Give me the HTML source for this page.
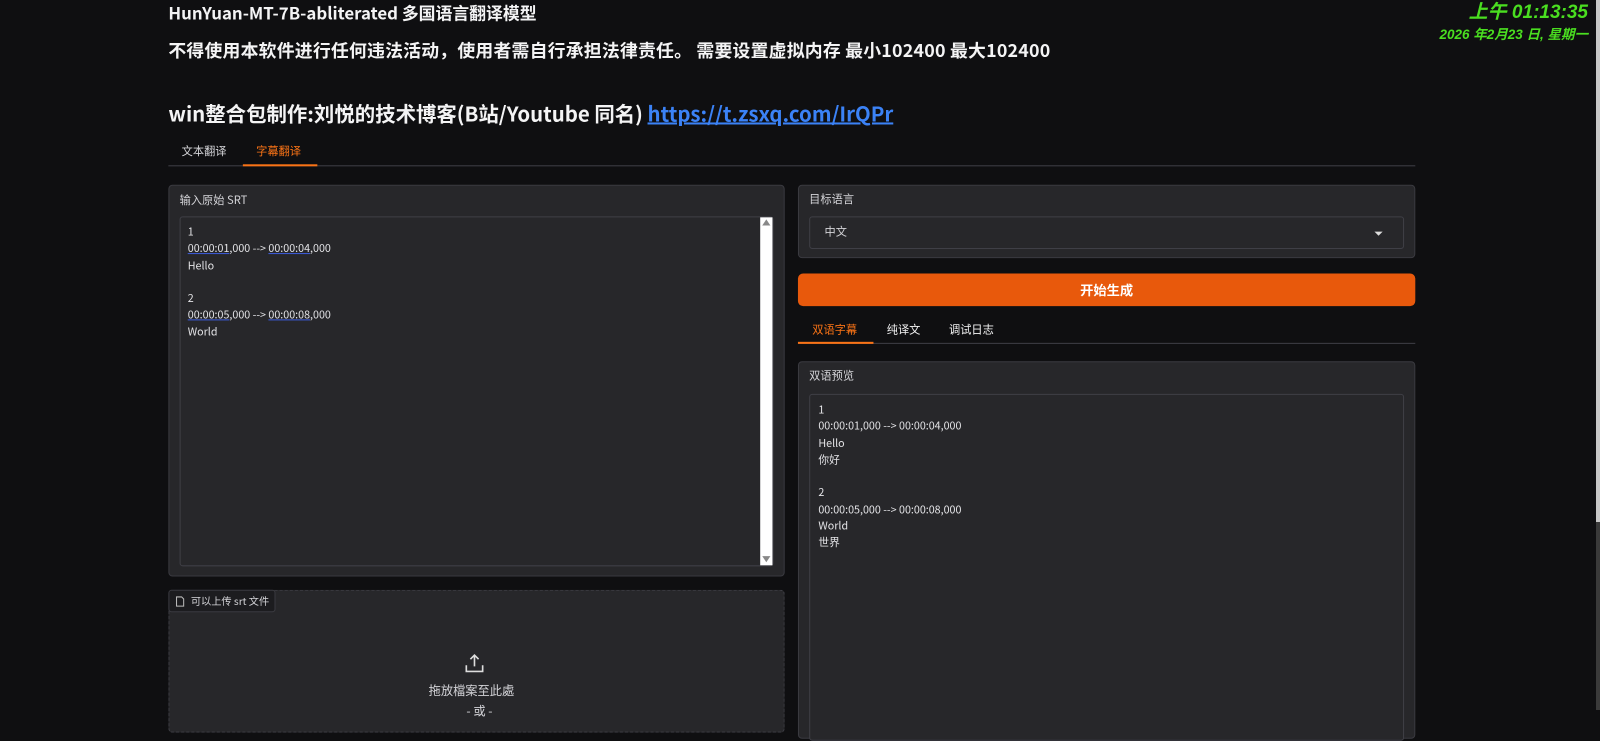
<!DOCTYPE html>
<html><head><meta charset="utf-8"><style>
*{box-sizing:border-box;margin:0;padding:0}
body{width:1600px;height:710px;overflow:hidden;background:#0f0f11;color:#e4e4e7;font-family:"Noto Sans CJK SC","Liberation Sans",sans-serif;position:relative}
#w{position:absolute;left:0;top:0;width:1568px;height:700px;transform:scale(1.0204);transform-origin:0 0}
.a{position:absolute}
.h{font-weight:bold;color:#f4f4f5;white-space:nowrap;line-height:1.2}
.panel{background:#27272a;border:1px solid #3a3a40;border-radius:4px}
.box{background:#27272a;border:1px solid #3f3f46;border-radius:3px}
.s{font-size:11px;color:#d4d4d8;line-height:1.3}
.mono{font-size:10.5px;line-height:16.3px;color:#e4e4e7}
u{text-decoration:underline;text-decoration-color:#3b5bdb}
</style></head><body>
<div id="w">
<div class="a h" style="left:165px;top:3px;font-size:16.5px">HunYuan-MT-7B-abliterated 多国语言翻译模型</div>
<div class="a h" style="left:165px;top:39px;font-size:17.5px;letter-spacing:0.2px">不得使用本软件进行任何违法活动，使用者需自行承担法律责任。 需要设置虚拟内存 最小102400 最大102400</div>
<div class="a h" style="left:165px;top:99px;font-size:20px">win整合包制作:刘悦的技术博客(B站/Youtube 同名) <span style="color:#3b82f6;text-decoration:underline">https://t.zsxq.com/IrQPr</span></div>
<!-- tabs -->
<div class="a s" style="left:178px;top:141px">文本翻译</div>
<div class="a s" style="left:251px;top:141px;color:#f97316">字幕翻译</div>
<div class="a" style="left:165px;top:162px;width:1222px;height:1px;background:#3f3f46"></div>
<div class="a" style="left:238px;top:161px;width:73px;height:2px;background:#f97316"></div>
<!-- left panel -->
<div class="a panel" style="left:165px;top:181px;width:604px;height:384px"></div>
<div class="a s" style="left:176px;top:189px">输入原始 SRT</div>
<div class="a box" style="left:176px;top:212px;width:582px;height:343px"></div>
<div class="a" style="left:745px;top:213px;width:12px;height:341px;background:#fff"></div>
<div class="a" style="left:747px;top:215px;width:0;height:0;border-left:4px solid transparent;border-right:4px solid transparent;border-bottom:6px solid #888"></div>
<div class="a" style="left:747px;top:545px;width:0;height:0;border-left:4px solid transparent;border-right:4px solid transparent;border-top:6px solid #888"></div>
<div class="a mono" style="left:184px;top:220px">1<br><u>00:00:01</u>,000 --&gt; <u>00:00:04</u>,000<br>Hello<br><br>2<br><u>00:00:05</u>,000 --&gt; <u>00:00:08</u>,000<br>World</div>
<!-- upload -->
<div class="a" style="left:165px;top:578px;width:604px;height:140px;background:#27272a;border:1px dashed #3f3f46;border-radius:4px"></div>
<div class="a" style="left:165px;top:578px;width:105px;height:22px;background:#1c1c1f;border:1px solid #3a3a40;border-radius:3px"></div>
<svg class="a" style="left:172px;top:584px" width="9" height="11" viewBox="0 0 9 11"><path d="M1 1h5l2 2v7H1z" fill="none" stroke="#bbb" stroke-width="1"/></svg>
<div class="a" style="left:187px;top:581px;font-size:10px;color:#d4d4d8">可以上传 srt 文件</div>
<svg class="a" style="left:455px;top:640px" width="20" height="20" viewBox="0 0 20 20" fill="none" stroke="#ddd" stroke-width="1.6"><path d="M10 13V2M6 6l4-4 4 4M2 12v6h16v-6"/></svg>
<div class="a" style="left:420px;top:668px;font-size:12px;color:#d4d4d8">拖放檔案至此處</div>
<div class="a" style="left:457px;top:688px;font-size:12px;color:#d4d4d8">- 或 -</div>
<!-- right -->
<div class="a panel" style="left:782px;top:181px;width:605px;height:72px"></div>
<div class="a s" style="left:793px;top:188px">目标语言</div>
<div class="a box" style="left:793px;top:212px;width:583px;height:32px"></div>
<div class="a s" style="left:808px;top:220px">中文</div>
<div class="a" style="left:1347px;top:227px;border-left:4px solid transparent;border-right:4px solid transparent;border-top:4px solid #ddd"></div>
<div class="a" style="left:782px;top:268px;width:605px;height:32px;background:#e8590c;border-radius:5px;color:#fff;font-weight:bold;font-size:13px;text-align:center;line-height:32px">开始生成</div>
<div class="a s" style="left:796px;top:316px;color:#f97316">双语字幕</div>
<div class="a s" style="left:869px;top:316px;color:#f4f4f5">纯译文</div>
<div class="a s" style="left:930px;top:316px;color:#f4f4f5">调试日志</div>
<div class="a" style="left:782px;top:336px;width:605px;height:1px;background:#3f3f46"></div>
<div class="a" style="left:782px;top:335px;width:74px;height:2px;background:#f97316"></div>
<div class="a panel" style="left:782px;top:354px;width:605px;height:370px"></div>
<div class="a s" style="left:793px;top:361px">双语预览</div>
<div class="a box" style="left:793px;top:386px;width:583px;height:340px"></div>
<div class="a mono" style="left:802px;top:394px">1<br>00:00:01,000 --&gt; 00:00:04,000<br>Hello<br>你好<br><br>2<br>00:00:05,000 --&gt; 00:00:08,000<br>World<br>世界</div>
</div>
<div class="a" style="right:12px;top:2px;color:#4ade20;font-style:italic;font-weight:bold;font-size:19px;line-height:1.2;text-align:right;white-space:nowrap;font-family:'Liberation Sans','Noto Sans CJK SC',sans-serif">上午 01:13:35</div>
<div class="a" style="right:12px;top:27px;color:#4ade20;font-style:italic;font-weight:bold;font-size:13.5px;line-height:1.2;text-align:right;white-space:nowrap;font-family:'Liberation Sans','Noto Sans CJK SC',sans-serif">2026 年2月23 日, 星期一</div>
<div class="a" style="right:0;top:0;width:4px;height:522px;background:#c8c8c8"></div>
<div class="a" style="right:0;top:522px;width:4px;height:188px;background:#3a3a3a"></div>
</body></html>
